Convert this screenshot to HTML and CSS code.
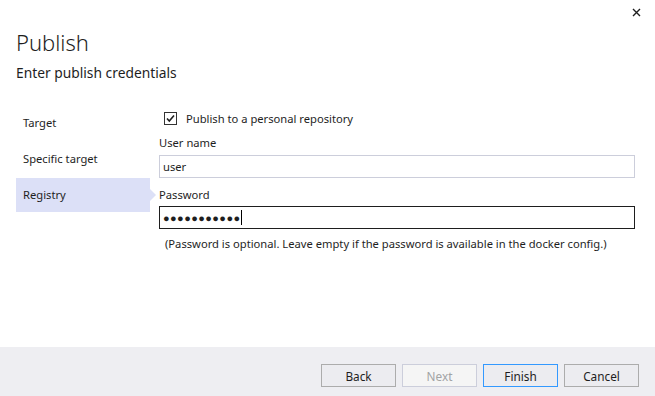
FILE: index.html
```html
<!DOCTYPE html>
<html lang="en">
<head>
    <meta charset="UTF-8">
    <title>Publish</title>
    <link rel="stylesheet" href="styles.css">
</head>
<body>
    <div class="dialog">
        <button class="close-btn" aria-label="Close">
            <svg width="9" height="9" viewBox="0 0 9 9">
                <path d="M1 1 L8 8 M8 1 L1 8" stroke="#1e1e1e" stroke-width="1.4" fill="none"/>
            </svg>
        </button>

        <header class="header">
            <h1>Publish</h1>
            <p class="subtitle">Enter publish credentials</p>
        </header>

        <main class="body">
            <nav class="steps">
                <div class="step">Target</div>
                <div class="step">Specific target</div>
                <div class="step active">Registry</div>
            </nav>

            <section class="form">
                <label class="check-row">
                    <span class="checkbox">
                        <svg width="11" height="11" viewBox="0 0 11 11">
                            <path d="M2 5.5 L4.3 8 L9 2.5" stroke="#1e1e1e" stroke-width="1.6" fill="none"/>
                        </svg>
                    </span>
                    Publish to a personal repository
                </label>

                <div class="field-label">User name</div>
                <div class="text-box">user</div>

                <div class="field-label pass-label">Password</div>
                <div class="text-box focused">
                    <span class="dots">&#9679;&#9679;&#9679;&#9679;&#9679;&#9679;&#9679;&#9679;&#9679;&#9679;&#9679;</span><span class="caret"></span>
                </div>

                <p class="hint">(Password is optional. Leave empty if the password is available in the docker config.)</p>
            </section>
        </main>

        <footer class="footer">
            <button class="btn">Back</button>
            <button class="btn" disabled>Next</button>
            <button class="btn default">Finish</button>
            <button class="btn">Cancel</button>
        </footer>
    </div>
</body>
</html>
```

FILE: styles.css
```css
:root {
    --text: #1e1e1e;
    --selected: #dce0f7;
    --footer-bg: #eeeef2;
    --btn-bg: #ececf0;
    --btn-border: #acacac;
    --input-border: #cccedb;
    --accent: #3399ff;
}

* {
    margin: 0;
    padding: 0;
    box-sizing: border-box;
}

body {
    font-family: "Noto Sans", sans-serif;
    font-size: 11.2px;
    color: var(--text);
    background-color: #fff;
}

.dialog {
    position: relative;
    width: 655px;
    height: 396px;
    display: flex;
    flex-direction: column;
}

.close-btn {
    position: absolute;
    top: 7px;
    right: 13px;
    width: 11px;
    height: 11px;
    border: none;
    background: none;
    display: flex;
    align-items: center;
    justify-content: center;
}

.header {
    padding: 26px 16px 0;
}

.header h1 {
    font-size: 22px;
    font-weight: 300;
    line-height: 32px;
}

.subtitle {
    font-size: 13.8px;
    line-height: 20px;
    margin-top: 5px;
}

.body {
    flex: 1;
    display: flex;
    padding: 23px 20px 0 16px;
}

.steps {
    width: 134px;
    display: flex;
    flex-direction: column;
    gap: 2px;
}

.step {
    position: relative;
    height: 34px;
    line-height: 34px;
    padding-left: 7px;
}

.step.active {
    background-color: var(--selected);
}

.step.active::after {
    content: "";
    position: absolute;
    top: 11px;
    right: -6px;
    border-top: 6px solid transparent;
    border-bottom: 6px solid transparent;
    border-left: 6px solid var(--selected);
}

.form {
    flex: 1;
    margin-left: 9px;
    padding-top: 4px;
}

.check-row {
    display: flex;
    align-items: center;
    height: 16px;
    margin-left: 5px;
}

.checkbox {
    width: 13px;
    height: 13px;
    border: 1px solid #333;
    margin-right: 9px;
    display: flex;
    align-items: center;
    justify-content: center;
}

.field-label {
    margin-top: 9px;
    line-height: 16px;
}

.pass-label {
    margin-top: 9px;
}

.text-box {
    margin-top: 4px;
    height: 23px;
    border: 1px solid var(--input-border);
    padding: 0 3px;
    display: flex;
    align-items: center;
}

.text-box.focused {
    margin-top: 3px;
    border-color: var(--text);
}

.dots {
    font-size: 11px;
    letter-spacing: 0.4px;
}

.caret {
    width: 1px;
    height: 15px;
    margin-left: 0;
    background-color: #000;
}

.hint {
    margin: 7px 0 0 6px;
    line-height: 16px;
    white-space: nowrap;
}

.footer {
    height: 49px;
    background-color: var(--footer-bg);
    display: flex;
    justify-content: flex-end;
    align-items: flex-start;
    gap: 6px;
    padding: 17px 16px 0 0;
}

.btn {
    width: 75px;
    height: 23px;
    font-family: inherit;
    font-size: 11.8px;
    color: var(--text);
    background-color: var(--btn-bg);
    border: 1px solid var(--btn-border);
}

.btn:disabled {
    color: #a2a4a5;
    background-color: #f5f5f5;
    border-color: #cccedb;
}

.btn.default {
    border-color: var(--accent);
}
```
